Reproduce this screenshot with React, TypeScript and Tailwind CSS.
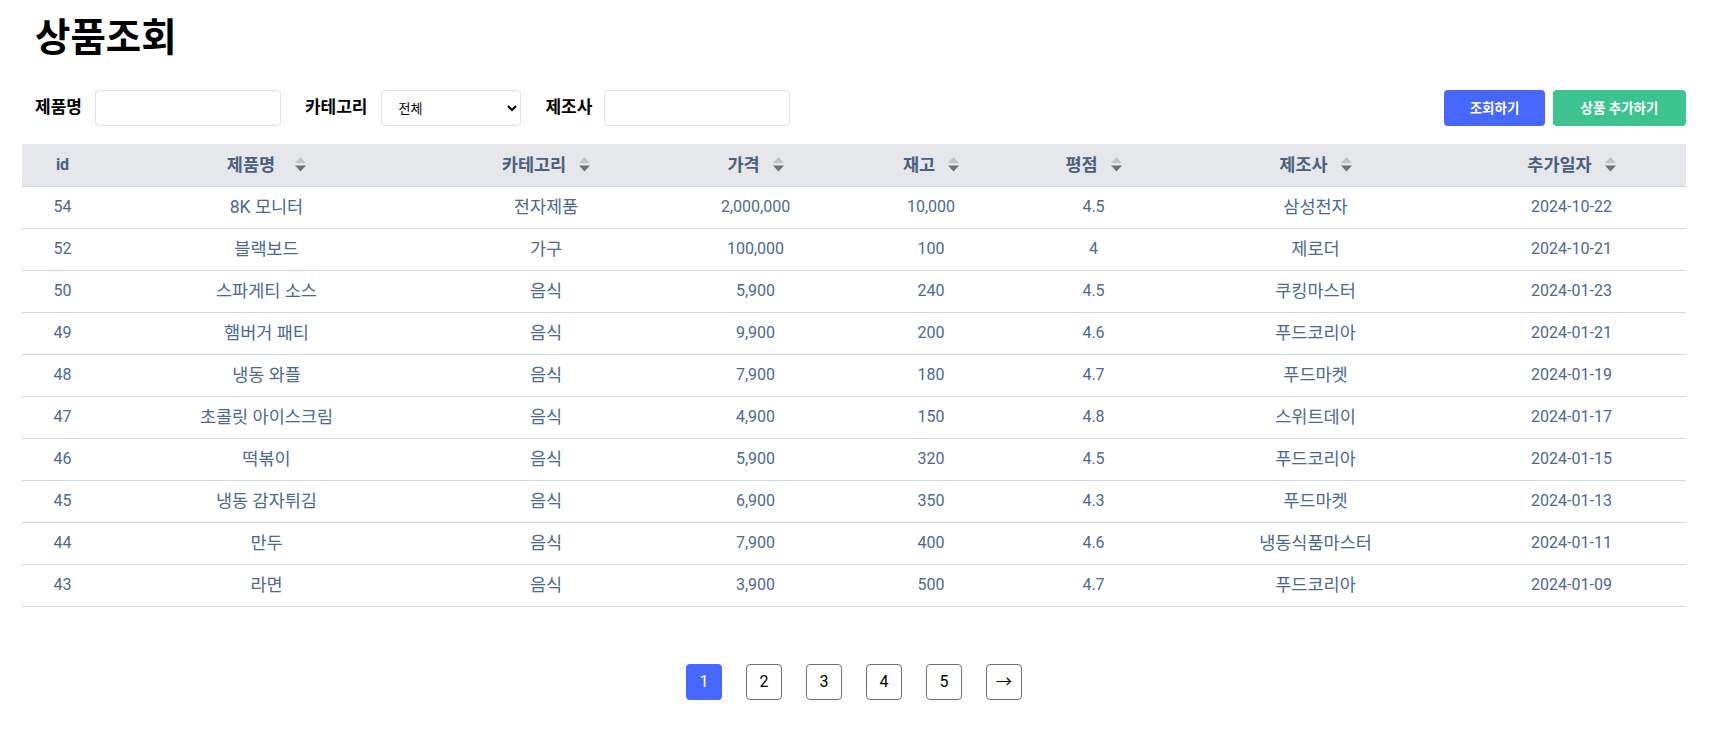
import React from "react";

const rows = [
  ["54", "8K 모니터", "전자제품", "2,000,000", "10,000", "4.5", "삼성전자", "2024-10-22"],
  ["52", "블랙보드", "가구", "100,000", "100", "4", "제로더", "2024-10-21"],
  ["50", "스파게티 소스", "음식", "5,900", "240", "4.5", "쿠킹마스터", "2024-01-23"],
  ["49", "햄버거 패티", "음식", "9,900", "200", "4.6", "푸드코리아", "2024-01-21"],
  ["48", "냉동 와플", "음식", "7,900", "180", "4.7", "푸드마켓", "2024-01-19"],
  ["47", "초콜릿 아이스크림", "음식", "4,900", "150", "4.8", "스위트데이", "2024-01-17"],
  ["46", "떡볶이", "음식", "5,900", "320", "4.5", "푸드코리아", "2024-01-15"],
  ["45", "냉동 감자튀김", "음식", "6,900", "350", "4.3", "푸드마켓", "2024-01-13"],
  ["44", "만두", "음식", "7,900", "400", "4.6", "냉동식품마스터", "2024-01-11"],
  ["43", "라면", "음식", "3,900", "500", "4.7", "푸드코리아", "2024-01-09"],
];

const widths = [81, 327, 232, 187, 164, 161, 283, 229];

const isKo = (s: string) => /[가-힣]/.test(s);

function SortIcon() {
  return (
    <svg width="11" height="15" viewBox="0 0 11 15" className="shrink-0">
      <polygon points="5.5,0 11,6 0,6" fill="#c2c2c2" />
      <polygon points="0,8.5 11,8.5 5.5,14.5" fill="#707070" />
    </svg>
  );
}

function Header({ label, sort = true, wide = false }: { label: string; sort?: boolean; wide?: boolean }) {
  return (
    <th className="h-[42px] p-0 font-bold text-[#4b607c] border-b border-[#cfd9e6]">
      <div className="flex items-center justify-center">
        <span className={isKo(label) ? "text-[17.5px]" : "text-[16px]"}>{label}</span>
        {sort && <span className={wide ? "ml-[20px] flex" : "ml-[13px] flex"}><SortIcon /></span>}
      </div>
    </th>
  );
}

export default function App() {
  return (
    <div className="font-['Roboto','Noto_Sans_CJK_KR',sans-serif] bg-white min-h-screen pl-[22px] pr-[31px] pt-[18px]">
      <h1 className="pl-[13px] text-[38.5px] leading-[40px] font-bold text-black">상품조회</h1>

      <div className="mt-[32px] flex items-center justify-between pl-[13px]">
        <div className="flex items-center">
          <label className="text-[17px] font-bold text-black mr-[13px]">제품명</label>
          <input className="w-[186px] h-9 border border-[#dfe1e5] rounded-[4px] px-2 text-[14px] outline-none" />
          <label className="text-[17px] font-bold text-black ml-6 mr-[14px]">카테고리</label>
          <select className="w-[140px] h-9 border border-[#dfe1e5] rounded-[4px] pl-3 pr-2 text-[13px] text-black bg-white outline-none">
            <option>전체</option>
          </select>
          <label className="text-[17px] font-bold text-black ml-6 mr-3">제조사</label>
          <input className="w-[186px] h-9 border border-[#dfe1e5] rounded-[4px] px-2 text-[14px] outline-none" />
        </div>
        <div className="flex items-center gap-2">
          <button className="h-9 w-[101px] rounded-[4px] bg-[#4768ff] text-white text-[13.5px] font-bold">조회하기</button>
          <button className="h-9 w-[133px] rounded-[4px] bg-[#3dc38f] text-white text-[13.5px] font-bold">상품 추가하기</button>
        </div>
      </div>

      <table className="mt-[18px] w-full table-fixed border-collapse">
        <colgroup>
          {widths.map((w, i) => (
            <col key={i} style={{ width: w }} />
          ))}
        </colgroup>
        <thead>
          <tr className="bg-[#e5e7eb]">
            <Header label="id" sort={false} />
            <Header label="제품명" wide />
            <Header label="카테고리" />
            <Header label="가격" />
            <Header label="재고" />
            <Header label="평점" />
            <Header label="제조사" />
            <Header label="추가일자" />
          </tr>
        </thead>
        <tbody>
          {rows.map((r) => (
            <tr key={r[0]} className="border-b border-[#cfd9e6]">
              {r.map((c, i) => (
                <td
                  key={i}
                  className={
                    isKo(c)
                      ? "h-[42px] p-0 text-center text-[17.5px] text-[#4a6a90]"
                      : "h-[42px] p-0 text-center text-[16px] text-[#4a6a90]"
                  }
                >
                  {c}
                </td>
              ))}
            </tr>
          ))}
        </tbody>
      </table>

      <div className="mt-[57px] flex justify-center gap-6">
        <button className="w-9 h-9 rounded-[4px] bg-[#4768ff] text-white text-[16px]">1</button>
        {["2", "3", "4", "5", "→"].map((p) => (
          <button key={p} className="w-9 h-9 rounded-[4px] border border-[#6b7280] bg-white text-black text-[16px]">
            {p}
          </button>
        ))}
      </div>
    </div>
  );
}
